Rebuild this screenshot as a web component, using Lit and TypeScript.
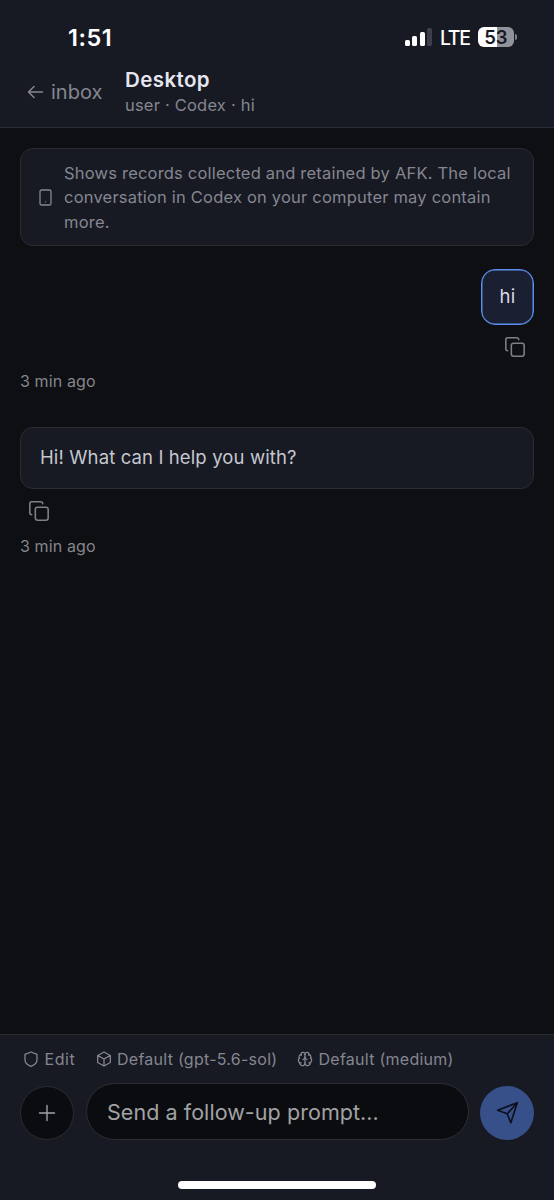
import { LitElement, html, css, svg } from "lit";
import { customElement } from "lit/decorators.js";

const copyIcon = html`<svg class="copy" viewBox="0 0 24 24">
  <rect x="8" y="8" width="14" height="14" rx="2.4" />
  <path d="M4 16c-1.1 0-2-.9-2-2V4c0-1.1.9-2 2-2h10c1.1 0 2 .9 2 2" />
</svg>`;

const brain = svg`
  <path d="M12 18V5" />
  <path d="M15 13a4.17 4.17 0 0 1-3-4 4.17 4.17 0 0 1-3 4" />
  <path d="M17.598 6.5A3 3 0 1 0 12 5a3 3 0 1 0-5.598 1.5" />
  <path d="M17.997 5.125a4 4 0 0 1 2.526 5.77" />
  <path d="M18 18a4 4 0 0 0 2-7.464" />
  <path d="M19.967 17.483A4 4 0 1 1 12 18a4 4 0 1 1-7.967-.517" />
  <path d="M6 18a4 4 0 0 1-2-7.464" />
  <path d="M6.003 5.125a4 4 0 0 0-2.526 5.77" />`;

@customElement("app-root")
export class AppRoot extends LitElement {
  static styles = css`
    :host {
      display: flex;
      flex-direction: column;
      width: 554px;
      height: 1200px;
      box-sizing: border-box;
      overflow: hidden;
      background: #0e0f13;
      color: #858690;
      font-family: Inter, "Liberation Sans", sans-serif;
      -webkit-font-smoothing: antialiased;
    }
    * { box-sizing: border-box; }
    svg {
      display: block;
      flex: none;
      fill: none;
      stroke: currentColor;
      stroke-width: 2;
      stroke-linecap: round;
      stroke-linejoin: round;
    }
    .top {
      height: 128px;
      flex: none;
      background: #171a23;
      border-bottom: 1px solid #2a2d35;
    }
    .status {
      height: 64px;
      padding: 10px 37.5px 0 68px;
      display: flex;
      align-items: center;
      color: #fff;
    }
    .clock {
      font-size: 23.5px;
      font-weight: 600;
      letter-spacing: 0.55px;
      margin-right: auto;
      padding-top: 1px;
    }
    .bars { display: flex; align-items: flex-end; gap: 2.5px; height: 18px; margin-right: 8px; }
    .bar { width: 5px; border-radius: 1.6px; background: #fff; }
    .b1 { height: 6.5px; }
    .b2 { height: 10px; }
    .b3 { height: 14px; }
    .b4 { height: 18px; background: #3c3f47; }
    .lte { font-size: 19.5px; font-weight: 500; margin-right: 8.5px; letter-spacing: -1.4px; padding-top: 1px; }
    .battery {
      width: 35.5px;
      height: 20px;
      border-radius: 6px;
      background: linear-gradient(90deg, #fff 0 53%, #91939a 53%);
      color: #171a23;
      font-size: 18.5px;
      line-height: 20px;
      font-weight: 600;
      letter-spacing: -0.3px;
      text-align: center;
    }
    .cap { width: 2px; height: 6px; margin-left: 1px; border-radius: 0 2px 2px 0; background: #80828a; }
    .nav { display: flex; padding-left: 27px; }
    .back { display: flex; align-items: center; gap: 7px; width: 98px; height: 55px; font-size: 20px; }
    .arrow { width: 17px; height: 14px; stroke-width: 1.5; }
    .titles { display: flex; flex-direction: column; }
    .title { font-size: 20.5px; line-height: 26px; margin-top: 3px; font-weight: 600; color: #e6e6f0; letter-spacing: 0.4px; }
    .sub { font-size: 16.5px; line-height: 25px; letter-spacing: 0.2px; }
    .feed { flex: 1; padding: 20px 20px 0; display: flex; flex-direction: column; }
    .card { background: #171a23; border: 1.5px solid #2a2b35; border-radius: 13px; }
    .notice {
      height: 98px;
      display: flex;
      align-items: center;
      padding: 1px 0 0 18px;
      gap: 12px;
      font-size: 16.5px;
      line-height: 24.2px;
      letter-spacing: 0.2px;
    }
    .phone { width: 13px; height: 17px; stroke-width: 1.3; }
    .line { display: block; white-space: nowrap; }
    .me {
      align-self: flex-end;
      width: 53px;
      height: 56px;
      margin-top: 22.5px;
      padding-bottom: 2px;
      display: flex;
      align-items: center;
      justify-content: center;
      border: 1px solid #5b8def;
      box-shadow: inset 0 0 0 0.5px #5b8def;
      border-radius: 14px;
      background: #1a2032;
      color: #d9dae2;
      font-size: 18.5px;
      letter-spacing: 0.2px;
    }
    .copy { width: 22px; height: 22px; stroke-width: 1.7; color: #7f8084; }
    .copy-row { display: flex; padding: 0 8px; height: 22px; margin-top: 11px; }
    .end { justify-content: flex-end; }
    .time { font-size: 16px; line-height: 20px; margin-top: 13.5px; color: #85868c; letter-spacing: 0.12px; }
    .reply {
      height: 62.5px;
      margin-top: 35.5px;
      padding: 0 19px 2px;
      display: flex;
      align-items: center;
      color: #c6c7cf;
      font-size: 18.5px;
      letter-spacing: 0.12px;
    }
    .bottom {
      height: 166px;
      flex: none;
      display: flex;
      flex-direction: column;
      background: #171a23;
      border-top: 1.5px solid #292b35;
    }
    .chips { display: flex; height: 48px; padding-left: 23px; }
    .chip { display: flex; align-items: center; gap: 5.5px; font-size: 16px; white-space: nowrap; letter-spacing: 0.26px; }
    .chip svg { width: 16px; height: 16px; stroke-width: 1.9; }
    .edit { width: 72.5px; letter-spacing: 0.6px; }
    .model { width: 201.5px; }
    .compose { display: flex; align-items: flex-end; padding: 0 20px; height: 57px; }
    .round {
      width: 54px;
      height: 54px;
      border-radius: 50%;
      display: flex;
      align-items: center;
      justify-content: center;
      flex: none;
    }
    .plus { background: #0b0c0f; border: 1px solid #2a2c32; color: #a0a1a5; }
    .plus svg { width: 18px; height: 18px; stroke-width: 1.4; }
    .field {
      flex: 1;
      height: 57px;
      margin: 0 11.5px;
      padding: 0 20.5px;
      border: 1px solid #2c2e34;
      border-radius: 29px;
      background: #0b0c0f;
      color: #a1a2a5;
      font-size: 21.5px;
      letter-spacing: 0.06px;
      line-height: 56px;
      white-space: nowrap;
    }
    .send { background: #385089; color: #0c1120; }
    .send svg { width: 24px; height: 24px; stroke-width: 1.7; }
    .home { align-self: center; width: 198px; height: 8px; border-radius: 4px; background: #fff; margin-top: 40.5px; }
  `;

  render() {
    return html`
      <header class="top">
        <div class="status">
          <span class="clock">1:51</span>
          <div class="bars">
            <i class="bar b1"></i><i class="bar b2"></i><i class="bar b3"></i><i class="bar b4"></i>
          </div>
          <span class="lte">LTE</span>
          <span class="battery">53</span><i class="cap"></i>
        </div>
        <div class="nav">
          <div class="back">
            <svg class="arrow" viewBox="0 0 17 14"><path d="M15.5 7H1.5M7 1.5L1.5 7L7 12.5" /></svg>
            <span>inbox</span>
          </div>
          <div class="titles">
            <span class="title">Desktop</span>
            <span class="sub">user · Codex · hi</span>
          </div>
        </div>
      </header>
      <main class="feed">
        <section class="card notice">
          <svg class="phone" viewBox="0 0 13 17">
            <rect x="1" y="1" width="11" height="15" rx="1.6" />
            <path d="M6.5 12.8v.01" />
          </svg>
          <div>
            <span class="line">Shows records collected and retained by AFK. The local</span>
            <span class="line">conversation in Codex on your computer may contain</span>
            <span class="line">more.</span>
          </div>
        </section>
        <div class="me">hi</div>
        <div class="copy-row end">${copyIcon}</div>
        <div class="time">3 min ago</div>
        <section class="card reply">Hi! What can I help you with?</section>
        <div class="copy-row">${copyIcon}</div>
        <div class="time">3 min ago</div>
      </main>
      <footer class="bottom">
        <div class="chips">
          <div class="chip edit">
            <svg viewBox="0 0 24 24"><path d="M12 1.5l9 3.5v8c0 5-4 8-9 10-5-2-9-5-9-10V5z" /></svg>
            <span>Edit</span>
          </div>
          <div class="chip model">
            <svg viewBox="0 0 24 24">
              <path d="M12 1.5l9.5 5.2v10.6L12 22.5l-9.5-5.2V6.7zM2.8 7L12 12l9.2-5M12 12v10" />
            </svg>
            <span>Default (gpt-5.6-sol)</span>
          </div>
          <div class="chip">
            <svg viewBox="0 0 24 24">${brain}</svg>
            <span>Default (medium)</span>
          </div>
        </div>
        <div class="compose">
          <div class="round plus">
            <svg viewBox="0 0 18 18"><path d="M9 1.5v15M1.5 9h15" /></svg>
          </div>
          <div class="field">Send a follow-up prompt...</div>
          <div class="round send">
            <svg viewBox="0 0 24 24"><path d="M2.6 9.2L22.3 1.7L15.8 21.8l-3.6-9zM12.2 12.8L22.3 1.7" /></svg>
          </div>
        </div>
        <div class="home"></div>
      </footer>
    `;
  }
}
